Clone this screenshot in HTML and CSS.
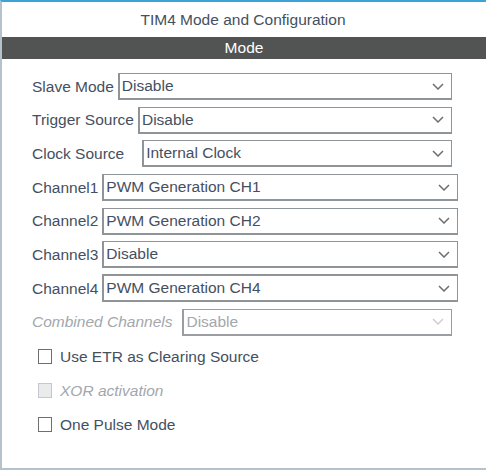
FILE: index.html
```html
<!DOCTYPE html>
<html>
<head>
<meta charset="utf-8">
<link rel="stylesheet" href="styles.css">
</head>
<body>
<div class="panel">
  <div class="title">TIM4 Mode and Configuration</div>
  <div class="bar">Mode</div>
  <div class="form">
    <div class="row">
      <span class="lbl">Slave Mode</span>
      <div class="sel"><span class="val">Disable</span><svg class="chev" width="12" height="7" viewBox="0 0 12 7"><polyline points="1,1 6,6 11,1" fill="none" stroke="#6e6e6e" stroke-width="1.5"/></svg></div>
    </div>
    <div class="row">
      <span class="lbl">Trigger Source</span>
      <div class="sel"><span class="val">Disable</span><svg class="chev" width="12" height="7" viewBox="0 0 12 7"><polyline points="1,1 6,6 11,1" fill="none" stroke="#6e6e6e" stroke-width="1.5"/></svg></div>
    </div>
    <div class="row">
      <span class="lbl lbl-clock">Clock Source</span>
      <div class="sel"><span class="val">Internal Clock</span><svg class="chev" width="12" height="7" viewBox="0 0 12 7"><polyline points="1,1 6,6 11,1" fill="none" stroke="#6e6e6e" stroke-width="1.5"/></svg></div>
    </div>
    <div class="row wide">
      <span class="lbl">Channel1</span>
      <div class="sel"><span class="val">PWM Generation CH1</span><svg class="chev" width="12" height="7" viewBox="0 0 12 7"><polyline points="1,1 6,6 11,1" fill="none" stroke="#6e6e6e" stroke-width="1.5"/></svg></div>
    </div>
    <div class="row wide">
      <span class="lbl">Channel2</span>
      <div class="sel"><span class="val">PWM Generation CH2</span><svg class="chev" width="12" height="7" viewBox="0 0 12 7"><polyline points="1,1 6,6 11,1" fill="none" stroke="#6e6e6e" stroke-width="1.5"/></svg></div>
    </div>
    <div class="row wide">
      <span class="lbl">Channel3</span>
      <div class="sel"><span class="val">Disable</span><svg class="chev" width="12" height="7" viewBox="0 0 12 7"><polyline points="1,1 6,6 11,1" fill="none" stroke="#6e6e6e" stroke-width="1.5"/></svg></div>
    </div>
    <div class="row wide">
      <span class="lbl">Channel4</span>
      <div class="sel sel-focus"><span class="val">PWM Generation CH4</span><svg class="chev" width="12" height="7" viewBox="0 0 12 7"><polyline points="1,1 6,6 11,1" fill="none" stroke="#6e6e6e" stroke-width="1.5"/></svg></div>
    </div>
    <div class="row disabled">
      <span class="lbl lbl-comb">Combined Channels</span>
      <div class="sel"><span class="val">Disable</span><svg class="chev" width="12" height="7" viewBox="0 0 12 7"><polyline points="1,1 6,6 11,1" fill="none" stroke="#cfcfcf" stroke-width="1.5"/></svg></div>
    </div>
  </div>
  <div class="checks">
    <div class="check"><span class="box"></span><span class="ctext">Use ETR as Clearing Source</span></div>
    <div class="check off"><span class="box"></span><span class="ctext">XOR activation</span></div>
    <div class="check"><span class="box"></span><span class="ctext">One Pulse Mode</span></div>
  </div>
</div>
</body>
</html>
```

FILE: styles.css
```css
html, body {
  margin: 0;
  padding: 0;
  background: #ffffff;
}
body {
  width: 486px;
  height: 470px;
  overflow: hidden;
  font-family: "Liberation Sans", Arial, sans-serif;
  font-size: 15.5px;
  color: #45505f;
}
.panel {
  box-sizing: border-box;
  width: 486px;
  height: 470px;
  border-top: 2px solid #3ba3d8;
  border-left: 2px solid #b6c2ca;
  border-bottom: 2px solid #b6c2ca;
  display: flex;
  flex-direction: column;
}
.title {
  height: 35px;
  line-height: 35px;
  text-align: center;
  color: #45505f;
  margin-left: -2px;
}
.bar {
  height: 22px;
  line-height: 22px;
  background: #525453;
  color: #ffffff;
  text-align: center;
}
.form {
  padding-top: 14px;
  padding-left: 30px;
  display: flex;
  flex-direction: column;
  gap: 6.7px;
}
.row {
  width: 420px;
  height: 27px;
  display: flex;
  align-items: center;
  gap: 4px;
}
.row.wide {
  width: 426px;
}
.lbl {
  white-space: nowrap;
}
.lbl-clock {
  margin-right: 14px;
}
.lbl-comb {
  margin-right: 6px;
}
.sel {
  flex: 1;
  box-sizing: border-box;
  height: 27px;
  border: 1px solid #8f9499;
  border-left-width: 2px;
  border-bottom-width: 2px;
  display: flex;
  align-items: center;
  justify-content: space-between;
  padding: 0 7px 0 2px;
  background: #ffffff;
}
.sel-focus {
  border-top-width: 2px;
  height: 28px;
  margin-top: -1px;
}
.val {
  white-space: nowrap;
}
.chev {
  display: block;
}
.disabled .lbl {
  font-style: italic;
  color: #a2a7ad;
}
.disabled .val {
  color: #a2a7ad;
}
.disabled .sel {
  border-color: #9a9ea3;
}
.checks {
  margin-top: 11px;
  padding-left: 36px;
  display: flex;
  flex-direction: column;
  gap: 14px;
}
.check {
  height: 20px;
  display: flex;
  align-items: center;
  gap: 8px;
}
.box {
  box-sizing: border-box;
  width: 14px;
  height: 15px;
  border: 1.5px solid #6f6f6f;
  background: #ffffff;
}
.check.off .box {
  border-color: #c4c8cc;
  background: #e9ebed;
}
.check.off .ctext {
  font-style: italic;
  color: #a2a7ad;
}
```
